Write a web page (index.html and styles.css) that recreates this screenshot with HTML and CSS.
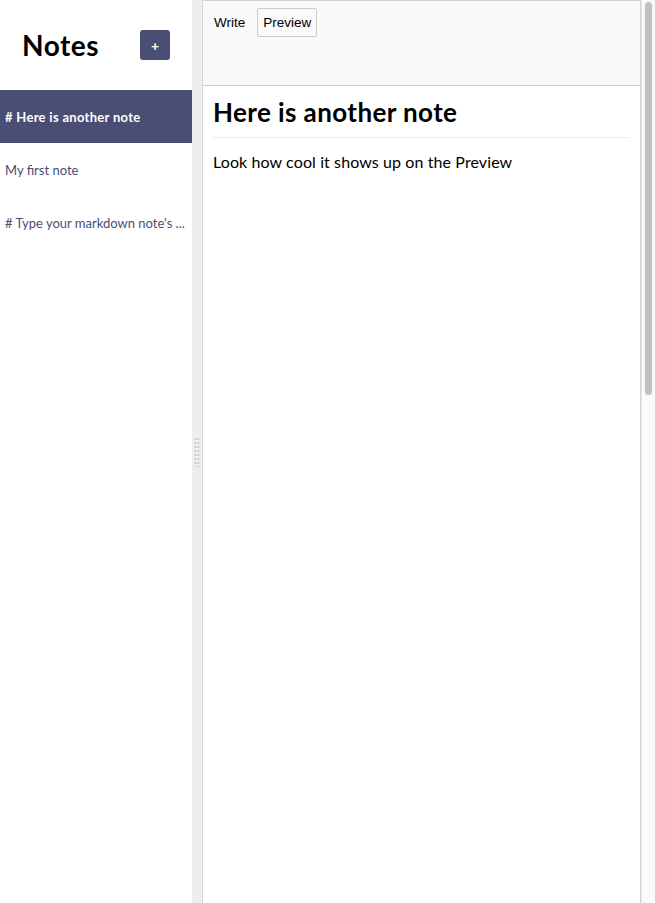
FILE: index.html
```html
<!DOCTYPE html>
<html>
<head>
<meta charset="utf-8">
<link rel="stylesheet" href="styles.css">
</head>
<body>
<main class="split">
  <section class="sidebar">
    <div class="sidebar-header">
      <h3 class="title">Notes</h3>
      <button class="new-note">+</button>
    </div>
    <div class="note-row selected"><h4 class="note-title">#&nbsp;Here is another note</h4></div>
    <div class="note-row"><h4 class="note-title">My first note</h4></div>
    <div class="note-row"><h4 class="note-title"># Type your markdown note's ...</h4></div>
  </section>
  <div class="gutter"><span class="grip"></span></div>
  <section class="editor">
    <div class="mde">
      <div class="toolbar">
        <button class="tab">Write</button>
        <button class="tab active">Preview</button>
      </div>
      <div class="preview">
        <h1 class="md-h1">Here is another note</h1>
        <p class="md-p">Look how cool it shows up on the Preview</p>
      </div>
    </div>
    <div class="scrollbar"><div class="thumb"></div></div>
  </section>
</main>
</body>
</html>
```
FILE: styles.css
```css
html, body {
  margin: 0;
  padding: 0;
  height: 100%;
  background: #fff;
  font-family: "Lato", "Open Sans", sans-serif;
}
.split {
  display: flex;
  height: 903px;
  overflow: hidden;
}
.sidebar {
  width: 192px;
  flex: none;
}
.sidebar-header {
  display: flex;
  align-items: center;
  justify-content: space-between;
  height: 90px;
  padding: 0 22px 0 22px;
  box-sizing: border-box;
}
.title {
  margin: 0;
  font-size: 28px;
  font-weight: 700;
  letter-spacing: 0.5px;
  color: #000;
}
.new-note {
  width: 30px;
  height: 30px;
  border: none;
  border-radius: 3px;
  background: #4a4e74;
  color: #fff;
  font-family: "Lato", sans-serif;
  font-size: 14px;
  font-weight: 700;
  padding: 0;
}
.note-row {
  height: 53px;
  display: flex;
  align-items: center;
  padding-left: 5px;
}
.note-title {
  margin: 0;
  font-size: 13px;
  font-weight: 400;
  color: #4a4e74;
  white-space: nowrap;
}
.note-row.selected {
  background: #4a4e74;
}
.note-row.selected .note-title {
  color: #fff;
  font-weight: 700;
  letter-spacing: 0.3px;
}
.gutter {
  width: 10px;
  flex: none;
  background: #eee;
  display: flex;
  align-items: center;
  justify-content: center;
}
.grip {
  width: 6px;
  height: 30px;
  background-image: radial-gradient(circle, #c8c8c8 1px, transparent 1.2px);
  background-size: 3px 4px;
}
.editor {
  flex: 1;
  display: flex;
  min-width: 0;
}
.mde {
  flex: 1;
  border: 1px solid #d1d5da;
  border-bottom: none;
  display: flex;
  flex-direction: column;
}
.toolbar {
  height: 85px;
  background: #f9f9f9;
  border-bottom: 1px solid #c8ccd0;
  box-sizing: border-box;
  display: flex;
  align-items: flex-start;
  padding: 7px 0 0 5px;
  gap: 6px;
}
.tab {
  font-family: "Liberation Sans", Arial, sans-serif;
  font-size: 13.5px;
  color: #000;
  background: transparent;
  border: 1px solid transparent;
  border-radius: 2px;
  height: 29px;
  padding: 0 5px;
}
.tab.active {
  border-color: #c8ccd0;
}
.preview {
  padding: 10px;
}
.md-h1 {
  margin: 0;
  font-size: 26px;
  font-weight: 700;
  color: #000;
  padding-bottom: 9px;
  border-bottom: 1px solid #eaecef;
  letter-spacing: 0.4px;
}
.md-p {
  margin: 14px 0 0;
  font-size: 16px;
  letter-spacing: 0.1px;
  color: #000;
}
.scrollbar {
  width: 14px;
  flex: none;
  background: #fafafa;
  border-left: 1px solid #e8e8e8;
  padding: 2px 3px;
  box-sizing: border-box;
}
.thumb {
  height: 393px;
  background: #c1c1c1;
  border-radius: 4px;
}
```
